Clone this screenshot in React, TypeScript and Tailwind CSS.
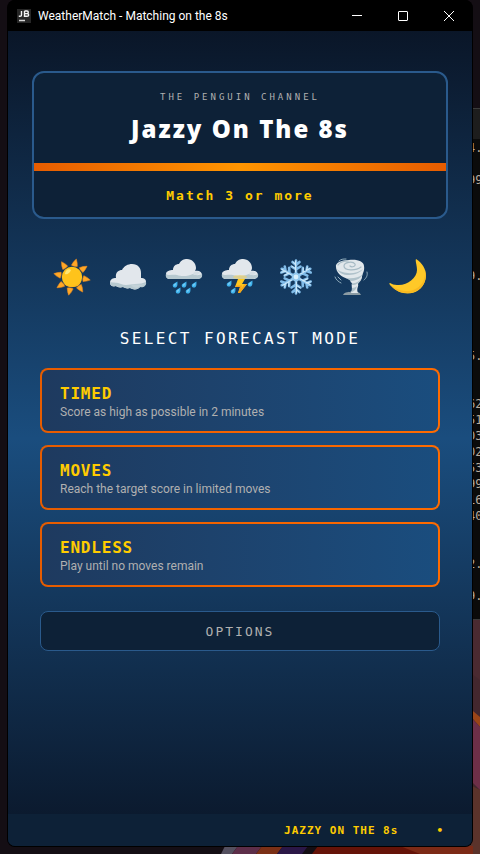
import React from 'react';

interface Mode {
    id: string;
    name: string;
    description: string;
}

const MODES: Mode[] = [
    { id: 'timed', name: 'TIMED', description: 'Score as high as possible in 2 minutes' },
    { id: 'moves', name: 'MOVES', description: 'Reach the target score in limited moves' },
    { id: 'endless', name: 'ENDLESS', description: 'Play until no moves remain' },
];

const TERMINAL_LINES = [
    '4.', '', '99', '', '', '', '', '', '9.', '', '', '', '', '5.', '', '',
    '62', '51', '03', '02', '53', '99', '16', '40', '', '', '2.', '', '9.',
];

const RainCloud: React.FC = () => (
    <>
        <path d="M2 17 C2 14 6 13 9 13 C9 9 12 7 15 7 C17 3 20 2 23 2 C28 2 32 6 32 11 C32 12 31 14 31 14 C35 13 38 15 38 18 C38 21 36 22 33 22 H6 C3 22 2 20 2 17 Z" fill="#e2e7ec" />
        <path d="M2 17 C5 19 9 17 13 18 C18 20 25 19 29 17 C32 19 36 18 38 17 C39 20 36 22 33 22 H6 C3 22 1 20 2 17 Z" fill="#b7c9d0" />
        <path d="M29 17 C30 14 34 14 36 16 C34 18 31 19 29 17 Z" fill="#d4dee4" />
    </>
);

const Drop: React.FC<{ x: number; y: number }> = ({ x, y }) => (
    <g transform={`translate(${x} ${y})`}>
        <path d="M4.4 -.4 C4.6 3 4.4 5.6 2 5.6 C-.4 5.6 -1 3 .8 1.8 Z" fill="#40b4ee" />
        <path d="M3 1 L1 3 L2 4 Z" fill="#a3dcf7" />
    </g>
);

const Icon: React.FC<{ label: string; children: React.ReactNode }> = ({ label, children }) => (
    <svg viewBox="0 0 40 40" className="size-10 shrink-0" role="img" aria-label={label}>
        {children}
    </svg>
);

const SunIcon: React.FC = () => (
    <Icon label="Sun">
        {[12, 53, 98, 143, 189, 233, 279, 324].map((angle) => (
            <path key={angle} d="M17 8.5 Q20 9.6 23 8.5 Q22.4 5 20.5 1.5 Q18 4.5 17 8.5 Z" fill="#ffa726" stroke="#f28c1b" strokeWidth=".5" transform={`rotate(${angle} 20 20)`} />
        ))}
        <circle cx="20" cy="20" r="10.2" fill="#ffc31b" />
        <path d="M13 17 C13 13 17 11 19 13 C18 16 15 18 13 17 Z" fill="#ffe774" />
        <path d="M11 25 C15 30 24 31 29 24 C28 29 24 30 20 30 C16 30 12 28 11 25 Z" fill="#ffb81a" />
    </Icon>
);

const CloudIcon: React.FC = () => (
    <Icon label="Cloud">
        <path d="M2 26 C2 22 5 21 8 21 C7 15 11 13 14 13 C16 9 20 7 24 7 C30 7 33 11 33 16 V21 C36 21 38 22 38 25 C38 29 34 30 32 30 C30 33 25 33 22 31 C19 32 17 31 15 30 C12 31 9 30 8 29 C5 30 2 29 2 26 Z" fill="#e2e7ec" />
        <path d="M2 25 C6 26 9 25 13 27 C18 29 23 27 27 27 C32 27 35 26 38 25 C39 29 35 31 32 30 C30 33 25 33 22 31 C19 32 17 31 15 30 C12 31 9 30 8 29 C5 30 2 29 2 25 Z" fill="#b7c9d0" />
        <path d="M23 28 C28 27 33 28 37 27 C35 29 31 29 29 31 C27 31 24 30 23 28 Z" fill="#ccd8de" opacity=".6" />
    </Icon>
);

const RainIcon: React.FC = () => (
    <Icon label="Rain">
        <RainCloud />
        <Drop x={9} y={25} />
        <Drop x={18} y={25} />
        <Drop x={28} y={25} />
        <Drop x={12} y={31} />
        <Drop x={22} y={31} />
    </Icon>
);

const StormIcon: React.FC = () => (
    <Icon label="Thunderstorm">
        <RainCloud />
        <ellipse cx="20" cy="20" rx="7" ry="2" fill="#ead276" opacity=".7" />
        <path d="M18 22 L15 30 H20 L18 36 L20 36 L27 27 H22 L25 22 Z" fill="#ffc71e" />
        <path d="M15 30 H20 L18 36 L20 36 L27 27 H24.5 L21 32 L22 28.6 H16 Z" fill="#f5a51b" />
        <Drop x={7} y={24} />
        <Drop x={28} y={24} />
        <Drop x={11} y={31} />
    </Icon>
);

const SnowIcon: React.FC = () => (
    <Icon label="Snow">
        {[0, 60, 120, 180, 240, 300].map((angle) => (
            <g key={angle} transform={`rotate(${angle} 20 20)`} fill="none" strokeLinecap="round" strokeLinejoin="round">
                <path d="M20 19 V3.5 M20 8 L16.5 5 M20 8 L23.5 5 M20 12.5 L15.5 9.5 M20 12.5 L24.5 9.5" stroke="#81bce9" strokeWidth="2.6" />
                <path d="M19.6 18 V4 M20 12 L15.8 9.2 M20 8 L17 5.2" stroke="#d3ebfa" strokeWidth="1" />
            </g>
        ))}
        <path d="M20 15 L24.3 17.5 V22.5 L20 25 L15.7 22.5 V17.5 Z" fill="#90c7ee" />
        <circle cx="20" cy="20" r="2.4" fill="#d8effc" />
    </Icon>
);

const TornadoIcon: React.FC = () => (
    <Icon label="Tornado">
        <path d="M11 38 C13 34 17 36 20 34 C24 35 27 34 29 38 Z" fill="#8b9ba4" />
        <path d="M4 10 C3 6 9 3 17 3 C26 2 32 5 32 9 C33 14 30 17 30 20 C30 23 27 25 26 27 C27 30 24 31 26 36 H19 C21 31 19 29 20 26 C17 25 20 22 16 22 C9 20 4 15 4 10 Z" fill="#e1e7eb" />
        <path d="M5 12 C10 17 24 18 31 12 C29 15 23 18 17 18 C11 18 7 16 5 12 Z M14 21 C20 22 27 21 31 17 C30 20 25 24 19 24 Z M20 26 C24 27 27 24 29 22 C28 26 24 28 20 28 Z M20 31 C22 31 24 30 25 29 C24 32 23 34 20 35 Z" fill="#afc1ca" />
        <path d="M18 9 C20 11 24 9 23 7 C21 4 12 5 12 9 C12 14 24 14 29 10 M6 8 C8 5 12 4 16 4" fill="none" stroke="#a6bac4" strokeWidth="1.2" strokeLinecap="round" />
        <path d="M7 4 C9 2 11 2 14 2 M35 15 C36 19 34 21 32 23 M3 20 C4 23 7 25 9 26 M6 20 L9 23" fill="none" stroke="#93afbe" strokeWidth="1" strokeLinecap="round" />
    </Icon>
);

const MoonIcon: React.FC = () => (
    <Icon label="Moon">
        <path d="M28 2 C36 7 40 16 37 24 C33 38 14 41 3 29 C1 27 1 26 2 26 C4 27 6 28 9 28 C19 29 29 21 29 13 C29 8 27 4 28 2 Z" fill="#ffc928" />
        <path d="M37 13 C41 27 30 37 19 36 C12 36 6 33 2 27 C8 33 14 34 20 34 C31 33 38 25 37 13 Z" fill="#f9b920" />
    </Icon>
);

// Wallpaper that shows around the edges of the game window
const Desktop: React.FC = () => (
    <svg className="absolute inset-0 size-full" viewBox="0 0 480 854" preserveAspectRatio="none" aria-hidden="true">
        <rect width="480" height="854" fill="#140e14" />
        <rect x="460" y="619" width="20" height="235" fill="#43272e" />
        <path d="M460 619 H480 V680 L460 665 Z" fill="#4a2a31" />
        <path d="M460 700 L480 717 V727 L460 704 Z" fill="#9a4518" />
        <path d="M460 706 L480 727 V790 L460 770 Z" fill="#6d2f48" />
        <path d="M460 780 L480 790 V854 H460 Z" fill="#5b332b" />
        <path d="M225 846 H238 L232 854 H221 Z" fill="#54505f" />
        <path d="M238 846 H262 L256 854 H232 Z" fill="#5d2e49" />
        <path d="M262 846 H283 L277 854 H256 Z" fill="#7b3016" />
        <path d="M283 846 H308 L302 854 H277 Z" fill="#2b1747" />
        <path d="M318 846 H473 V854 H312 Z" fill="#651308" />
        <path d="M400 846 H473 V854 H420 Z" fill="#7c2a16" />
    </svg>
);

const Terminal: React.FC = () => (
    <div className="absolute left-[468px] right-0 top-[108px] overflow-hidden border-y border-[#3b3b3b] bg-[#0b0b0b]" aria-hidden="true">
        <div className="h-[30px] bg-[#1d1d1d]" />
        <div className="pt-px pb-[15px] font-['DejaVu_Sans_Mono',monospace] text-xs leading-4 text-[#b9ada0]">
            {TERMINAL_LINES.map((line, index) => (
                <div key={index} className="h-4">{line}</div>
            ))}
        </div>
    </div>
);

const TitleBar: React.FC = () => (
    <header className="flex h-[31px] items-center bg-black pl-[9px] text-white">
        <svg viewBox="0 0 14 14" className="size-3.5" aria-hidden="true">
            <rect width="14" height="14" fill="#262626" />
            <path d="M4.5 2 V6 Q4.5 7.3 3 7.3 H1.8 M7.5 2 V7.3 H10 Q11.7 7.3 11.7 5.9 Q11.7 4.6 10 4.6 H7.5 M10 4.6 Q11.3 4.5 11.3 3.3 Q11.3 2 10 2 H7.5" fill="none" stroke="#f2f2f2" strokeWidth="1.4" />
            <path d="M2 11.5 H8" stroke="#d5d5d5" strokeWidth="1.3" />
        </svg>
        <h1 className="ml-[7px] flex-1 whitespace-nowrap font-['Roboto',sans-serif] text-xs">WeatherMatch - Matching on the 8s</h1>
        <button type="button" aria-label="Minimize" className="flex h-full w-[46px] items-center justify-center">
            <svg viewBox="0 0 10 10" className="size-2.5"><path d="M0 4.5 H10" stroke="white" /></svg>
        </button>
        <button type="button" aria-label="Maximize" className="flex h-full w-[46px] items-center justify-center">
            <svg viewBox="0 0 10 10" className="size-2.5"><rect x=".5" y=".5" width="9" height="9" rx=".5" fill="none" stroke="white" /></svg>
        </button>
        <button type="button" aria-label="Close" className="flex h-full w-[46px] items-center justify-center">
            <svg viewBox="0 0 10 10" className="size-2.5"><path d="M0 0 L10 10 M10 0 L0 10" stroke="white" /></svg>
        </button>
    </header>
);

const ModeButton: React.FC<{ mode: Mode }> = ({ mode }) => (
    <button type="button" className="w-full rounded-lg bg-linear-to-r from-[#e65c00] to-[#ff6b00] p-0.5 text-left">
        <span className="block rounded-md bg-linear-to-r from-[#1e3a5f] to-[#1a4d7e] px-[18px] pt-3.5 pb-[11px]">
            <span className="block font-['DejaVu_Sans_Mono',monospace] text-base leading-5 font-bold tracking-wider text-[#ffcc00]">
                {mode.name}
            </span>
            <span className="block font-['Roboto',sans-serif] text-xs leading-4 text-[#b0b0b0]">{mode.description}</span>
        </span>
    </button>
);

export default function App() {
    return (
        <div className="relative flex min-h-screen flex-col overflow-hidden bg-[#140e14] px-[7px] pb-[7px] font-['Noto_Sans',sans-serif]">
            <Desktop />
            <Terminal />
            <div className="relative flex flex-1 flex-col overflow-hidden rounded-lg border border-t-0 border-black bg-black">
                <TitleBar />
                <div className="flex flex-1 flex-col bg-linear-to-b/srgb from-[#0a1628] via-[#1a4d7e] to-[#0a1628]">
                    <main className="flex flex-1 flex-col px-6 pt-10">
                        <section className="rounded-xl border-2 border-[#2a5a8c] bg-[#0d2137] text-center">
                            <p className="pt-4 font-['DejaVu_Sans_Mono',monospace] text-[9px] leading-4 tracking-[3px] text-[#b0b0b0]">
                                THE PENGUIN CHANNEL
                            </p>
                            <h2 className="pt-1.5 pb-4 text-2xl leading-9 font-black tracking-[2px] text-white">Jazzy On The 8s</h2>
                            <div className="h-2 bg-linear-to-r/srgb from-[#e65c00] via-[#ff9500] to-[#e65c00]" />
                            <p className="pt-[15px] pb-[11px] font-['DejaVu_Sans_Mono',monospace] text-[13px] leading-5 font-bold tracking-[2px] text-[#ffcc00]">
                                Match 3 or more
                            </p>
                        </section>

                        <div className="mt-[38px] flex justify-center gap-4">
                            <SunIcon />
                            <CloudIcon />
                            <RainIcon />
                            <StormIcon />
                            <SnowIcon />
                            <TornadoIcon />
                            <MoonIcon />
                        </div>

                        <section className="px-2">
                            <h3 className="mt-[30px] text-center font-['DejaVu_Sans_Mono',monospace] text-base leading-6 tracking-[0.15em] text-white">
                                SELECT FORECAST MODE
                            </h3>
                            <div className="mt-[17px] flex flex-col gap-3">
                                {MODES.map((mode) => (
                                    <ModeButton key={mode.id} mode={mode} />
                                ))}
                            </div>
                            <button
                                type="button"
                                className="mt-6 h-10 w-full rounded-lg border border-[#2a5a8c] bg-[#0d2137] pt-0.5 font-['DejaVu_Sans_Mono',monospace] text-[13px] tracking-[2px] text-[#b0b0b0]"
                            >
                                OPTIONS
                            </button>
                        </section>
                    </main>
                    <footer className="flex h-8 items-center justify-end gap-[38px] bg-[#0d2137] pt-0.5 pr-7 font-['DejaVu_Sans_Mono',monospace] text-[11px] font-bold tracking-[1px] text-[#ffcc00]">
                        <span>JAZZY ON THE 8s</span>
                        <span>•</span>
                    </footer>
                </div>
            </div>
        </div>
    );
}
